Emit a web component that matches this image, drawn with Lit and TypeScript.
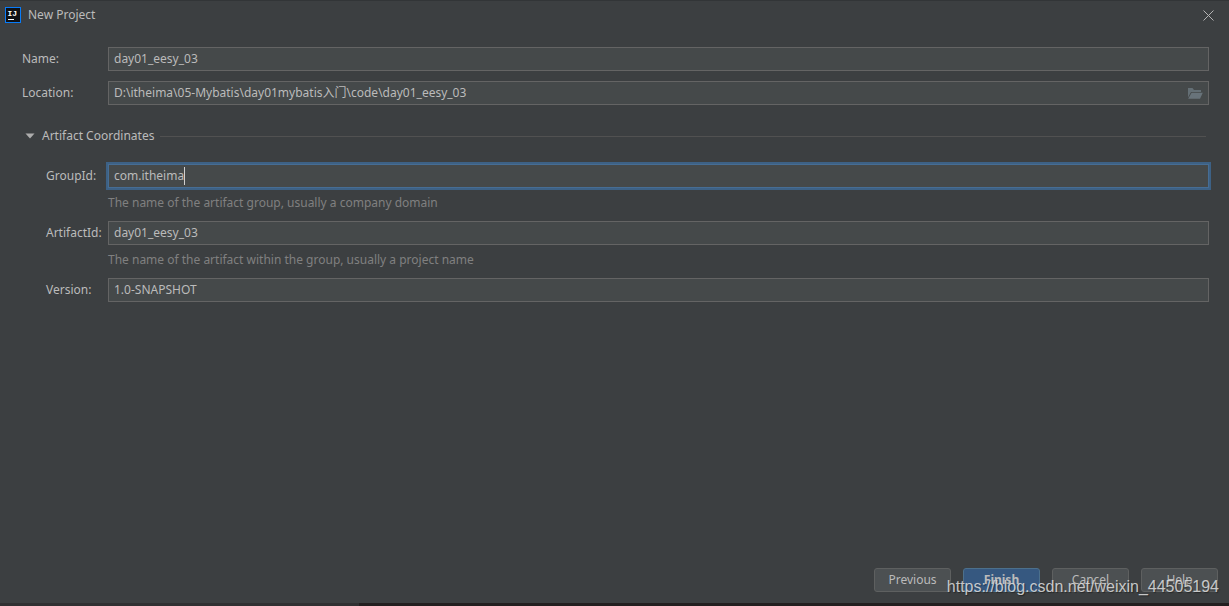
import { LitElement, html, css, nothing } from "lit";
import { customElement, property, state } from "lit/decorators.js";
import { classMap } from "lit/directives/class-map.js";
import { styleMap } from "lit/directives/style-map.js";

const UI_FONT = '"Noto Sans", "Noto Sans CJK SC", sans-serif';

@customElement("text-field")
class TextField extends LitElement {
  @property() label = "";
  @property() value = "";
  @property() hint = "";
  @property({ type: Boolean }) nested = false;
  @property({ type: Boolean }) active = false;
  @property({ type: Boolean }) browse = false;
  @state() private caret = 0;

  static styles = css`
    :host {
      display: block;
    }
    .row {
      display: grid;
      grid-template-columns: 86px minmax(0, 1fr);
      align-items: center;
    }
    .label {
      white-space: nowrap;
    }
    .nested {
      padding-left: 24px;
    }
    .box {
      position: relative;
      display: flex;
      align-items: center;
      box-sizing: border-box;
      height: 24px;
      border: 1px solid #646464;
      background: #45494a;
    }
    .active {
      border-color: #466d94;
      box-shadow: 0 0 0 2px #3d6185;
    }
    .input {
      flex: 1;
      min-width: 0;
      height: 22px;
      box-sizing: border-box;
      margin: 0;
      padding: 0 5px 2px;
      border: 0;
      outline: 0;
      background: transparent;
      color: #bbbbbb;
      font: inherit;
    }
    .caret {
      position: absolute;
      top: 2px;
      width: 1px;
      height: 18px;
      background: #d0d0d0;
    }
    .browse {
      display: flex;
      padding: 0 5px;
      border: 0;
      background: transparent;
    }
    .hint {
      grid-column: 2;
      margin: 0;
      padding-top: 5px;
      line-height: 20px;
      color: #808080;
    }
  `;

  firstUpdated() {
    if (!this.active) return;
    const ctx = document.createElement("canvas").getContext("2d");
    if (!ctx) return;
    ctx.font = `12px ${UI_FONT}`;
    this.caret = Math.round(ctx.measureText(this.value).width) + 5;
  }

  render() {
    return html`
      <div class="row">
        <label class=${classMap({ label: true, nested: this.nested })} for="field">${this.label}</label>
        <div class=${classMap({ box: true, active: this.active })}>
          <input class="input" id="field" type="text" .value=${this.value} spellcheck="false" />
          ${this.active && this.caret
            ? html`<span class="caret" style=${styleMap({ left: `${this.caret}px` })}></span>`
            : nothing}
          ${this.browse
            ? html`<button class="browse" type="button" aria-label="Browse">
                <svg width="16" height="14" viewBox="0 0 16 14">
                  <path d="M1 11.5V2h4.5l1.5 2H14v2H4z" fill="#646f75" />
                  <path d="M4.6 6.8H15.8L13 12.8H1.2z" fill="#68737a" />
                </svg>
              </button>`
            : nothing}
        </div>
        ${this.hint ? html`<p class="hint">${this.hint}</p>` : nothing}
      </div>
    `;
  }
}

@customElement("app-root")
class AppRoot extends LitElement {
  @state() private expanded = true;

  static styles = css`
    :host {
      display: flex;
      flex-direction: column;
      box-sizing: border-box;
      min-height: 100vh;
      border-top: 1px solid #323537;
      background: #3c3f41;
      color: #bbbbbb;
      font: 12px/20px "Noto Sans", "Noto Sans CJK SC", sans-serif;
    }
    .titlebar {
      display: flex;
      align-items: center;
      gap: 7px;
      height: 28px;
      padding: 0 10px 0 5px;
    }
    .logo-text {
      font: 700 8px "Liberation Mono", monospace;
    }
    .title {
      flex: 1;
      margin: 0;
      font: inherit;
    }
    .close {
      display: flex;
      padding: 5px;
      border: 0;
      background: transparent;
    }
    .form {
      flex: 1;
      display: flex;
      flex-direction: column;
      gap: 10px;
      padding: 18px 20px 0 22px;
    }
    .section {
      display: flex;
      align-items: center;
      gap: 6px;
      padding: 11px 3px 8px 0;
    }
    .toggle {
      display: flex;
      align-items: center;
      gap: 7px;
      padding: 0 0 0 3px;
      border: 0;
      background: transparent;
      color: inherit;
      font: inherit;
    }
    .rule {
      flex: 1;
      height: 1px;
      background: #515151;
    }
    .coordinates {
      display: flex;
      flex-direction: column;
      gap: 8px;
    }
    .footer {
      position: relative;
      display: flex;
      justify-content: flex-end;
      gap: 12px;
      padding: 12px 11px 11px;
    }
    .action {
      width: 77px;
      height: 24px;
      box-sizing: border-box;
      padding: 0;
      border: 1px solid #5e6060;
      border-radius: 3px;
      background: #4c5052;
      color: #bbbbbb;
      font: inherit;
    }
    .primary {
      border-color: #4c708c;
      background: #365880;
      font-weight: 700;
    }
    .watermark {
      position: absolute;
      right: 10px;
      bottom: 6px;
      color: rgba(225, 225, 225, 0.85);
      font: 16px/20px "Liberation Sans", Arial, sans-serif;
      text-shadow: 1px 1px 1px rgba(0, 0, 0, 0.4);
      pointer-events: none;
    }
    .edge {
      height: 3px;
      background: linear-gradient(to right, #303032 359px, #231f20 359px);
    }
  `;

  render() {
    return html`
      <header class="titlebar">
        <svg width="16" height="16" viewBox="0 0 16 16" aria-hidden="true">
          <rect x="0.5" y="0.5" width="15" height="15" fill="#101114" stroke="#087cfa" />
          <text class="logo-text" x="2.5" y="8.5" fill="#fff">IJ</text>
          <path d="M3 12.5h6" stroke="#fff" />
        </svg>
        <h1 class="title">New Project</h1>
        <button class="close" type="button" aria-label="Close">
          <svg width="11" height="11" viewBox="0 0 11 11">
            <path d="M0.5 0.5L10.5 10.5M10.5 0.5L0.5 10.5" stroke="#b4b4b4" />
          </svg>
        </button>
      </header>
      <main class="form">
        <text-field label="Name:" value="day01_eesy_03"></text-field>
        <text-field
          label="Location:"
          value="D:\\itheima\\05-Mybatis\\day01mybatis入门\\code\\day01_eesy_03"
          browse
        ></text-field>
        <div class="section">
          <button
            class="toggle"
            type="button"
            aria-expanded=${this.expanded}
            @click=${() => (this.expanded = !this.expanded)}
          >
            <svg width="10" height="6" viewBox="0 0 10 6"><path d="M0.5 0.5h9L5 5.5z" fill="#adadad" /></svg>
            Artifact Coordinates
          </button>
          <span class="rule"></span>
        </div>
        ${this.expanded
          ? html`<div class="coordinates">
              <text-field
                label="GroupId:"
                value="com.itheima"
                hint="The name of the artifact group, usually a company domain"
                nested
                active
              ></text-field>
              <text-field
                label="ArtifactId:"
                value="day01_eesy_03"
                hint="The name of the artifact within the group, usually a project name"
                nested
              ></text-field>
              <text-field label="Version:" value="1.0-SNAPSHOT" nested></text-field>
            </div>`
          : nothing}
      </main>
      <footer class="footer">
        <button class="action" type="button">Previous</button>
        <button class="action primary" type="button">Finish</button>
        <button class="action" type="button">Cancel</button>
        <button class="action" type="button">Help</button>
        <span class="watermark">https://blog.csdn.net/weixin_44505194</span>
      </footer>
      <div class="edge"></div>
    `;
  }
}
